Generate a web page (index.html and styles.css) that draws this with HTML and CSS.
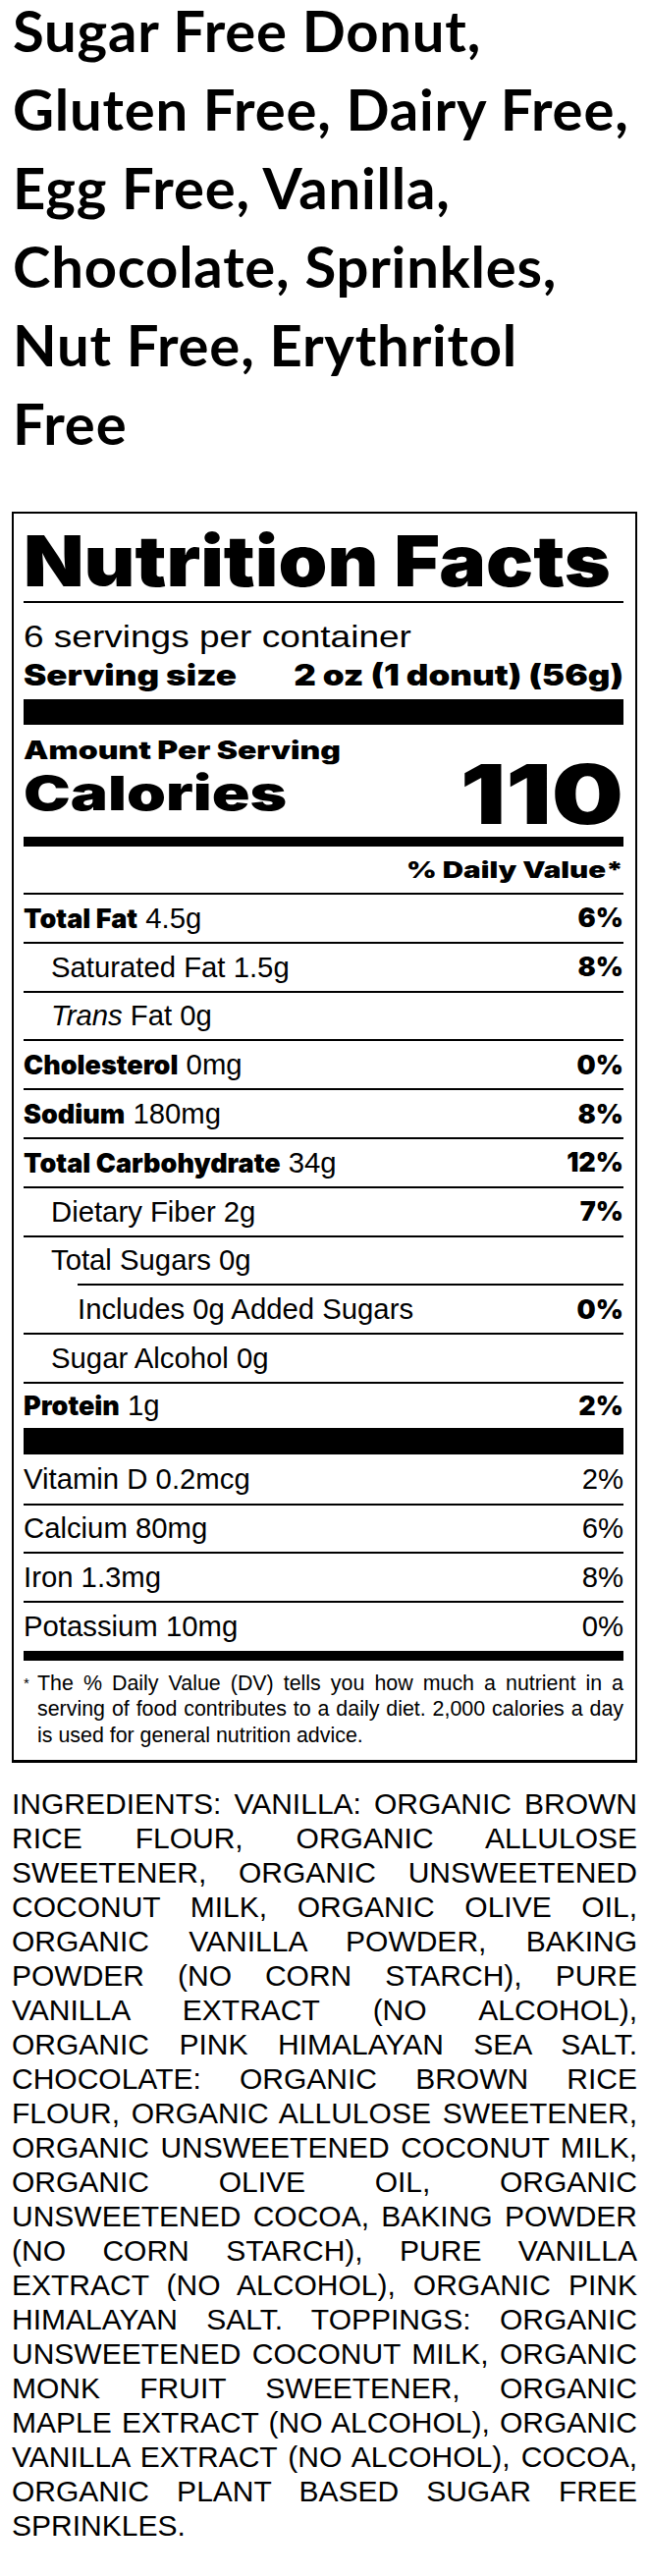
FILE: index.html
```html
<!DOCTYPE html>
<html lang="en">
<head>
<meta charset="utf-8">
<title>Sugar Free Donut</title>
<link rel="stylesheet" href="styles.css">
</head>
<body>
<main class="page">
  <h1 class="title">Sugar Free Donut,<br>Gluten Free, Dairy Free,<br>Egg Free, Vanilla,<br>Chocolate, Sprinkles,<br>Nut Free, Erythritol<br>Free</h1>

  <section class="label">
    <h2 class="nf-title"><span class="wide">Nutrition Facts</span></h2>
    <div class="servings">
      <p class="servings-count"><span class="wide">6 servings per container</span></p>
      <p class="serving-size"><span>Serving size</span><span>2 oz (1 donut) (56g)</span></p>
    </div>
    <div class="bar bar-thick"></div>
    <div class="calories">
      <p class="amount"><span class="wide">Amount Per Serving</span></p>
      <p class="cal-row"><span class="cal-label">Calories</span><span class="cal-value">110</span></p>
    </div>
    <div class="bar bar-mid"></div>
    <p class="dv-head"><span>% Daily Value*</span></p>
    <ul class="nutrients">
      <li class="row"><span class="name"><b>Total Fat</b> 4.5g</span><b class="dv">6%</b></li>
      <li class="row sub"><span class="name">Saturated Fat 1.5g</span><b class="dv">8%</b></li>
      <li class="row sub"><span class="name"><i>Trans</i> Fat 0g</span></li>
      <li class="row"><span class="name"><b>Cholesterol</b> 0mg</span><b class="dv">0%</b></li>
      <li class="row"><span class="name"><b>Sodium</b> 180mg</span><b class="dv">8%</b></li>
      <li class="row"><span class="name"><b>Total Carbohydrate</b> 34g</span><b class="dv">12%</b></li>
      <li class="row sub"><span class="name">Dietary Fiber 2g</span><b class="dv">7%</b></li>
      <li class="row sub"><span class="name">Total Sugars 0g</span></li>
      <li class="row subsub"><span class="name">Includes 0g Added Sugars</span><b class="dv">0%</b></li>
      <li class="row sub"><span class="name">Sugar Alcohol 0g</span></li>
      <li class="row last"><span class="name"><b>Protein</b> 1g</span><b class="dv">2%</b></li>
    </ul>
    <div class="bar bar-thick2"></div>
    <ul class="vitamins">
      <li class="vrow"><span>Vitamin D 0.2mcg</span><span>2%</span></li>
      <li class="vrow"><span>Calcium 80mg</span><span>6%</span></li>
      <li class="vrow"><span>Iron 1.3mg</span><span>8%</span></li>
      <li class="vrow vlast"><span>Potassium 10mg</span><span>0%</span></li>
    </ul>
    <div class="bar bar-mid"></div>
    <div class="foot">
      <span class="star">*</span>
      <p class="foot-text"><span class="ln">The % Daily Value (DV) tells you how much a nutrient in a</span><span class="ln">serving of food contributes to a daily diet. 2,000 calories a day</span><span class="ln end">is used for general nutrition advice.</span></p>
    </div>
  </section>

  <p class="ingredients"><span class="ln">INGREDIENTS: VANILLA: ORGANIC BROWN</span><span class="ln">RICE FLOUR, ORGANIC ALLULOSE</span><span class="ln">SWEETENER, ORGANIC UNSWEETENED</span><span class="ln">COCONUT MILK, ORGANIC OLIVE OIL,</span><span class="ln">ORGANIC VANILLA POWDER, BAKING</span><span class="ln">POWDER (NO CORN STARCH), PURE</span><span class="ln">VANILLA EXTRACT (NO ALCOHOL),</span><span class="ln">ORGANIC PINK HIMALAYAN SEA SALT.</span><span class="ln">CHOCOLATE: ORGANIC BROWN RICE</span><span class="ln">FLOUR, ORGANIC ALLULOSE SWEETENER,</span><span class="ln">ORGANIC UNSWEETENED COCONUT MILK,</span><span class="ln">ORGANIC OLIVE OIL, ORGANIC</span><span class="ln">UNSWEETENED COCOA, BAKING POWDER</span><span class="ln">(NO CORN STARCH), PURE VANILLA</span><span class="ln">EXTRACT (NO ALCOHOL), ORGANIC PINK</span><span class="ln">HIMALAYAN SALT. TOPPINGS: ORGANIC</span><span class="ln">UNSWEETENED COCONUT MILK, ORGANIC</span><span class="ln">MONK FRUIT SWEETENER, ORGANIC</span><span class="ln">MAPLE EXTRACT (NO ALCOHOL), ORGANIC</span><span class="ln">VANILLA EXTRACT (NO ALCOHOL), COCOA,</span><span class="ln">ORGANIC PLANT BASED SUGAR FREE</span><span class="ln end">SPRINKLES.</span></p>
</main>
</body>
</html>
```

FILE: styles.css
```css
* { box-sizing: border-box; }
html, body { margin: 0; padding: 0; background: #fff; color: #000; }

.page { padding: 0 12px; }

.title {
  font-family: Lato, "Liberation Sans", sans-serif;
  font-weight: 700;
  font-size: 58px;
  line-height: 80px;
  letter-spacing: 0.8px;
  margin: -9px 0 50px;
  padding-left: 1px;
  white-space: nowrap;
}

.label {
  width: 637px;
  border: 2px solid #000;
  border-bottom-width: 3px;
  padding: 0 12px 0 10px;
  font-family: "Liberation Sans", Arial, sans-serif;
}
.label p, .label ul { margin: 0; padding: 0; list-style: none; }
.label b { font-family: Inter, "Liberation Sans", sans-serif; font-weight: 900; }

.wide { display: inline-block; }

.nf-title {
  margin: 0;
  font-family: Inter, "Liberation Sans", sans-serif;
  font-weight: 900;
  font-size: 80px;
  line-height: 72px;
  padding: 12px 0 5px;
  border-bottom: 2px solid #000;
  white-space: nowrap;
}
.nf-title .wide { transform: scaleY(0.9); }

.servings { padding: 16px 0 6px; }
.servings-count { font-size: 37px; line-height: 38px; white-space: nowrap; }
.servings-count .wide { transform: scaleY(0.83); }
.serving-size {
  display: flex; justify-content: space-between;
  font-family: Inter, "Liberation Sans", sans-serif; font-weight: 900;
  font-size: 35px; line-height: 38px; white-space: nowrap;
}
.serving-size span { transform: scaleY(0.85); }

.bar { background: #000; }
.bar-thick { height: 26px; }
.bar-thick2 { height: 27px; }
.bar-mid { height: 10px; }

.calories { padding: 13px 0 13px; }
.amount { font-family: Inter, sans-serif; font-weight: 900; font-size: 32px; line-height: 26px; white-space: nowrap; }
.amount .wide { transform: scaleY(0.79); }
.cal-row { display: flex; justify-content: space-between; align-items: center; height: 62px; font-family: Inter, sans-serif; font-weight: 900; }
.cal-label { font-size: 64px; line-height: 1; transform: scaleY(0.76); }
.cal-value { font-size: 103px; line-height: 1; transform: scaleY(0.81); }

.dv-head {
  height: 47px; display: flex; align-items: center; justify-content: flex-end;
  font-family: Inter, sans-serif; font-weight: 900; font-size: 29.5px; white-space: nowrap;
}
.dv-head span { transform: scaleY(0.77); }

.row {
  height: 49.8px;
  border-top: 2px solid #000;
  display: flex; justify-content: space-between; align-items: center;
  font-size: 29.3px;
  white-space: nowrap;
}
.row.sub { padding-left: 28px; }
.row.subsub { margin-left: 55px; }
.row.last { height: 47px; }
.row b { font-size: 27px; }
.row i { font-style: italic; }

.vrow {
  height: 49.6px;
  border-top: 2px solid #000;
  display: flex; justify-content: space-between; align-items: center;
  font-size: 29.3px;
}
.vrow:first-child { border-top: 0; }
.vrow.vlast { height: 51px; }

.foot { display: flex; padding: 10px 0 12px; font-size: 21.4px; line-height: 26.5px; }
.star { width: 14px; flex: none; font-size: 15px; }
.foot-text { flex: 1; }
.ln { display: block; text-align: justify; text-align-last: justify; white-space: nowrap; }
.ln.end { text-align-last: left; }

.ingredients {
  margin: 24px 0 0;
  font-family: "Liberation Sans", Arial, sans-serif;
  font-size: 30px;
  line-height: 35px;
  width: 637px;
}
```
